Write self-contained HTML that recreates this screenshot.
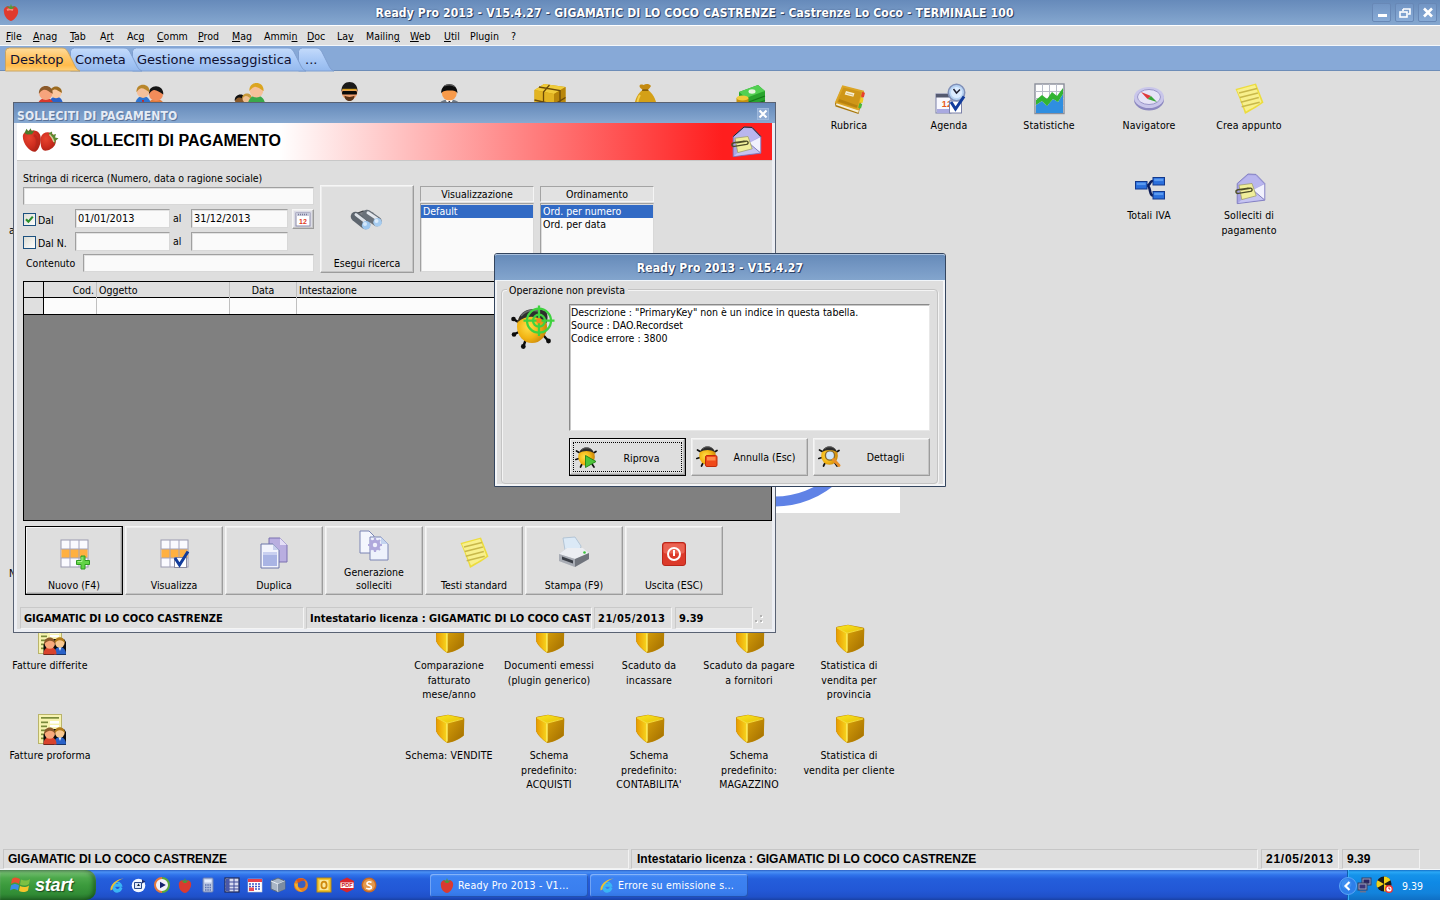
<!DOCTYPE html>
<html lang="it">
<head>
<meta charset="utf-8">
<title>Ready Pro 2013</title>
<style>
*{box-sizing:border-box;margin:0;padding:0}
html,body{width:1440px;height:900px;overflow:hidden}
body{position:relative;background:#dedede;font-family:"DejaVu Sans Condensed","Liberation Sans",sans-serif;font-size:10.5px;color:#000}
.abs{position:absolute}
.t{position:absolute;white-space:nowrap;line-height:14px;letter-spacing:0}
svg{position:absolute;overflow:visible}
u{text-decoration:underline}
/* main title bar */
#tb{left:0;top:0;width:1440px;height:25px;background:linear-gradient(#668aba 0%,#7699c5 50%,#86a8d0 100%)}
.ttl{color:#fff;font:bold 12px "DejaVu Sans Condensed","DejaVu Sans",sans-serif;letter-spacing:0.17px;text-shadow:1px 1px 0 #2e4163,0 0 2px #405a85;text-align:center}
.cbtn{position:absolute;top:3px;width:19px;height:19px;border:1px solid #6888b6;background:linear-gradient(#7295c4,#88abd6);border-radius:2px}
#mb{left:0;top:25px;width:1440px;height:21px;background:#dfdfdf;border-top:1px solid #fff;border-bottom:1px solid #f4f7fa}
#mb span{position:absolute;top:3px;white-space:nowrap;letter-spacing:0;line-height:14px}
#tabs{left:0;top:46px;width:1440px;height:25px;background:#87a9d7;border-bottom:1px solid #6d8db8}
.tl{position:absolute;top:6px;font:13px "DejaVu Sans",sans-serif;line-height:16px;white-space:nowrap;color:#101030}
#desk{left:0;top:71px;width:1440px;height:776px;background:#dedede;overflow:hidden}
.ic{position:absolute;width:120px;margin-left:-60px;text-align:center;line-height:14.6px;letter-spacing:0.12px;padding-top:35px}
.ic svg{left:44px;top:0;width:32px;height:32px}
#sb{left:0;top:847px;width:1440px;height:23px;background:#dedede;border-bottom:1px solid #f2f5f8}
.cell{position:absolute;top:2px;height:20px;border:1px solid;border-color:#c6c6c6 #f2f2f2 #f2f2f2 #c6c6c6;font:bold 12px "Liberation Sans",sans-serif;line-height:19px;padding-left:4px;white-space:nowrap;overflow:hidden}
#task{left:0;top:870px;width:1440px;height:30px;background:linear-gradient(#2b5fc4 0,#4a90f4 2px,#2f72ea 5px,#245edb 9px,#2257d5 21px,#1f50c8 27px,#1941a5 30px)}
/* child window */
.win{position:absolute;border:1px solid #596273;background:#eceef3}
.wtb{position:absolute;left:0;top:0;right:0;background:linear-gradient(#6589ba 0%,#7699c5 50%,#88a9d1 100%)}
.inp{position:absolute;background:#fafafa;border:1px solid;border-color:#a0a0a0 #d8d8d8 #d8d8d8 #a0a0a0;box-shadow:inset 1px 1px 0 #e2e2e2;font-size:10.9px;line-height:18px;padding-left:2px;white-space:nowrap;letter-spacing:0}
.btn{position:absolute;background:#dedede;border:1px solid;border-color:#f6f6f6 #9c9c9c #9c9c9c #f6f6f6;box-shadow:inset -1px -1px 0 #c4c4c4,inset 1px 1px 0 #ececec;text-align:center;letter-spacing:0;line-height:14px}
.btn.def{border-color:#000;box-shadow:inset -1px -1px 0 #9c9c9c,inset 1px 1px 0 #f6f6f6,inset -2px -2px 0 #c4c4c4}
.btn svg{position:absolute}
.btn span{position:absolute;left:0;right:0;white-space:nowrap}
.hdr{position:absolute;background:#e2e2e2;border:1px solid;border-color:#a4a4a4 #f4f4f4 #f4f4f4 #a4a4a4;text-align:center;line-height:14px;letter-spacing:0}
.lst{position:absolute;background:#fafafa;border:1px solid;border-color:#a0a0a0 #d8d8d8 #d8d8d8 #a0a0a0;box-shadow:inset 1px 1px 0 #dcdcdc;letter-spacing:0;line-height:13px}
.lst div{position:absolute;left:0;right:0;height:13px;padding-left:2px;white-space:nowrap}
.lst .sel{background:#316ac5;color:#fff}
.wc{position:absolute;top:1px;height:22px;border:1px solid;border-color:#c9c9c9 #f4f4f4 #f4f4f4 #c9c9c9;font:bold 11px "DejaVu Sans Condensed","DejaVu Sans",sans-serif;line-height:21px;padding-left:3px;white-space:nowrap;overflow:hidden}
</style>
</head>
<body>
<div id="desk" class="abs"></div>
<div id="tb" class="abs"><svg width="18" height="20" viewBox="0 0 18 20" style="left:2px;top:2px"><path d="M9,5 C13,3 17,6 16,11 C15,15 11,19 9,19 C7,19 2,15 2,10 C1,6 5,3 9,5Z" fill="#e03a2e"/><path d="M5,8 C7,7 9,7 11,8" stroke="#f58a7a" stroke-width="2" fill="none"/><path d="M4,4 L8,5 L9,2 L10,5 L14,4 L10,7 L8,7Z" fill="#4c9a3a"/></svg><div class="t ttl" style="left:0;width:1389px;top:6px">Ready Pro 2013 - V15.4.27 - GIGAMATIC DI LO COCO CASTRENZE - Castrenze Lo Coco - TERMINALE 100</div><div class="cbtn" style="left:1372px"><svg width="17" height="17" style="left:0;top:0"><rect x="5" y="10" width="9" height="3" fill="#fff"/></svg></div><div class="cbtn" style="left:1395px"><svg width="17" height="17" style="left:0;top:0"><path d="M7,5h7v5h-2 M7,5v2" stroke="#fff" stroke-width="1.6" fill="none"/><rect x="4" y="8" width="7" height="5" stroke="#fff" stroke-width="1.6" fill="none"/></svg></div><div class="cbtn" style="left:1418px"><svg width="17" height="17" style="left:0;top:0"><path d="M5,4.5l8,8M13,4.5l-8,8" stroke="#fff" stroke-width="2.6" fill="none"/></svg></div></div>
<div id="mb" class="abs"><span style="left:6px"><u>F</u>ile</span><span style="left:33px"><u>A</u>nag</span><span style="left:70px"><u>T</u>ab</span><span style="left:100px">A<u>r</u>t</span><span style="left:127px">Ac<u>q</u></span><span style="left:157px"><u>C</u>omm</span><span style="left:198px"><u>P</u>rod</span><span style="left:232px"><u>M</u>ag</span><span style="left:264px">Ammi<u>n</u></span><span style="left:307px"><u>D</u>oc</span><span style="left:337px">La<u>v</u></span><span style="left:366px">Mailin<u>g</u></span><span style="left:410px"><u>W</u>eb</span><span style="left:444px"><u>U</u>til</span><span style="left:470px">Plugin</span><span style="left:511px">?</span></div>
<div id="tabs" class="abs"><svg width="1440" height="25" style="left:0;top:0"><defs><linearGradient id="ga" x1="0" y1="0" x2="0" y2="1"><stop offset="0" stop-color="#ffdc9c"/><stop offset="0.35" stop-color="#ffc96e"/><stop offset="0.75" stop-color="#ffbb4c"/><stop offset="1" stop-color="#ffd27a"/></linearGradient><linearGradient id="gi" x1="0" y1="0" x2="0" y2="1"><stop offset="0" stop-color="#c4dbfb"/><stop offset="0.5" stop-color="#a9c9f6"/><stop offset="1" stop-color="#94b9ee"/></linearGradient></defs><path d="M298.5,25 L298.5,5.5 Q298.5,2 302.5,2 L316,2 C320,2 321.5,5 323,8 L329.5,21 Q331,24 334,25 Z" fill="url(#gi)" stroke="#7f9fd0" stroke-width="1"/><path d="M132.5,25 L132.5,5.5 Q132.5,2 136.5,2 L288,2 C292,2 293.5,5 295,8 L301.5,21 Q303,24 306,25 Z" fill="url(#gi)" stroke="#7f9fd0" stroke-width="1"/><path d="M70.5,25 L70.5,5.5 Q70.5,2 74.5,2 L124,2 C128,2 129.5,5 131,8 L137.5,21 Q139,24 142,25 Z" fill="url(#gi)" stroke="#7f9fd0" stroke-width="1"/><path d="M5.5,25 L5.5,5.5 Q5.5,2 9.5,2 L62,2 C66,2 67.5,5 69,8 L75.5,21 Q77,24 80,25 Z" fill="url(#ga)" stroke="#c9a463" stroke-width="1"/></svg><span class="tl" style="left:10px">Desktop</span><span class="tl" style="left:75px">Cometa</span><span class="tl" style="left:137px">Gestione messaggistica</span><span class="tl" style="left:305px">...</span></div>
<div id="sb" class="abs"><div class="cell" style="left:3px;width:626px">GIGAMATIC DI LO COCO CASTRENZE</div><div class="cell" style="left:631px;width:627px;padding-left:5px;letter-spacing:0.03px">Intestatario licenza : GIGAMATIC DI LO COCO CASTRENZE</div><div class="cell" style="left:1261px;width:78px;letter-spacing:0.75px">21/05/2013</div><div class="cell" style="left:1342px;width:78px">9.39</div></div>
<div id="task" class="abs"><div class="abs" style="left:0;top:0;width:96px;height:30px;border-radius:0 10px 10px 0;background:linear-gradient(#2f7d32 0,#6cba69 3px,#4ca84b 8px,#3c9b3d 15px,#318c35 24px,#256e2a 30px);box-shadow:inset -3px 0 4px rgba(0,40,0,.45),inset 0 2px 2px rgba(255,255,255,.25)"></div><svg width="20" height="18" viewBox="0 0 20 18" style="left:11px;top:6px"><path d="M1,3 C3,1 6,1 9,3 L8,8 C5,6 3,6 0,8Z" fill="#e8502f"/><path d="M10,3.5 C13,5 16,5 19,3 L18,8 C15,10 12,10 9,8.5Z" fill="#7cc043"/><path d="M0,9.5 C3,7.5 5,7.5 8,9.5 L7,14.5 C4,12.5 2,12.5 -1,14.5Z" fill="#3a8ee6"/><path d="M9,10 C12,11.5 15,11.5 18,9.5 L17,14.5 C14,16.5 11,16.5 8,15Z" fill="#f5c52c"/></svg><div class="t" style="left:35px;top:5px;color:#fff;font:italic bold 18px 'Liberation Sans',sans-serif;line-height:21px;letter-spacing:-0.2px;text-shadow:1px 1px 1px #1d4a1f">start</div><svg width="16" height="16" viewBox="0 0 16 16" style="left:109px;top:7px"><path d="M12.8,9.2H5.6a2.9 3.3 0 0 0 5.6 1.3l1.5.9a4.7 5 0 1 1 .1-2.2zM5.7,7.4h4.9a2.5 2.6 0 0 0-4.9 0z" fill="#3ab6f6" stroke="#3ab6f6" stroke-width="1.2"/><path d="M1.6,13.6 C0.5,9 6,2.5 14.6,1.6 C8,3.6 3.6,8.4 3.4,12.6Z" fill="#f0c030"/></svg><svg width="16" height="16" viewBox="0 0 16 16" style="left:131px;top:7px"><circle cx="7.5" cy="8.5" r="6.8" fill="#f4f8ff"/><path d="M3.5,5.5h7v6h-7z" fill="#dfe8f8" stroke="#2a4a8a" stroke-width="1"/><path d="M6,9l3,0-1.5,-2.5z" fill="#123"/><path d="M11,2.5l3.5,2-3.5,2z" fill="#1c2c6c"/></svg><svg width="16" height="16" viewBox="0 0 16 16" style="left:154px;top:7px"><circle cx="8" cy="8" r="7" fill="#f2f2fa"/><path d="M8,1 A7 7 0 0 0 8,15" stroke="#e8783a" stroke-width="2" fill="none"/><path d="M8,1 A7 7 0 0 1 8,15" stroke="#5aa83a" stroke-width="2" fill="none"/><path d="M6,4.8 L11.8,8 L6,11.2Z" fill="#14246c"/></svg><svg width="16" height="16" viewBox="0 0 16 16" style="left:177px;top:7px"><path d="M8,4 C12,2 15,5 14,9 C13,13 10,16 8,16 C6,16 2,13 2,9 C1,5 4,2 8,4Z" fill="#d93a30"/><path d="M4,3 L7,4 L8,1 L9,4 L12,3 L9,6 L7,6Z" fill="#4c9a3a"/></svg><svg width="16" height="16" viewBox="0 0 16 16" style="left:200px;top:7px"><rect x="3" y="1" width="10" height="14" rx="1" fill="#b9c6e2" stroke="#6f82b4" stroke-width="1"/><rect x="4.5" y="2.5" width="7" height="3" fill="#e8f0ff"/><path d="M5,8h6M5,10.5h6M5,13h6" stroke="#5d74b0" stroke-width="1.4" stroke-dasharray="1.5 0.8"/></svg><svg width="16" height="16" viewBox="0 0 16 16" style="left:224px;top:7px"><rect x="1" y="1" width="14" height="14" fill="#d8dcf0" stroke="#222a55" stroke-width="1.2"/><path d="M1,5h14M1,9h14M1,12h14M5,1v14M10,1v14" stroke="#3d4a9a" stroke-width="1"/><rect x="2" y="2" width="3" height="12" fill="#4a58a8"/></svg><svg width="16" height="16" viewBox="0 0 16 16" style="left:247px;top:7px"><rect x="1" y="2" width="14" height="13" fill="#fff" stroke="#c8ccd8" stroke-width=".6"/><rect x="1" y="2" width="14" height="3" fill="#e8404a"/><path d="M2,7h12M2,9.5h12M2,12h12" stroke="#3f57c8" stroke-width="1.6" stroke-dasharray="2 1"/><rect x="2" y="10.5" width="5" height="3.5" fill="#e84a55"/></svg><svg width="16" height="16" viewBox="0 0 16 16" style="left:270px;top:7px"><path d="M8,1 L15,4 L15,12 L8,15 L1,12 L1,4Z" fill="#a9b6c6" stroke="#5d6b7e" stroke-width="1"/><path d="M1,4 L8,7 L15,4 M8,7 V15" stroke="#e7edf4" stroke-width="1" fill="none"/><path d="M8,7 L15,4 L15,12 L8,15Z" fill="#7d8da2"/></svg><svg width="16" height="16" viewBox="0 0 16 16" style="left:293px;top:7px"><circle cx="8" cy="8" r="7" fill="#e8801f"/><circle cx="8.5" cy="7" r="4" fill="#3a5fc0"/><path d="M1.5,6 C2,12 6,15 10,14.5 C6,13 4,10 5,6 C4,7 2.5,7 1.5,6Z" fill="#f4b12c"/><path d="M3,3 C6,1 11,1 13,4 C10,3 7,4 6,6Z" fill="#d9531e"/></svg><svg width="16" height="16" viewBox="0 0 16 16" style="left:316px;top:7px"><rect x="1" y="1" width="14" height="14" fill="#f3c531" stroke="#b98a12" stroke-width="1"/><rect x="3.5" y="3" width="9" height="10" fill="#fbe9a0"/><ellipse cx="8" cy="8" rx="2.6" ry="3.4" fill="none" stroke="#d08a10" stroke-width="1.8"/></svg><svg width="16" height="16" viewBox="0 0 16 16" style="left:339px;top:7px"><path d="M8,0.5 L15,4 L15,12 L8,15.5 L1,12 L1,4Z" fill="#d8262c"/><rect x="1.5" y="5.5" width="13" height="5.5" fill="#fff"/><text x="8" y="10.3" font-family="Liberation Sans,sans-serif" font-weight="bold" font-size="5.5" text-anchor="middle" fill="#c8161d">PDF</text></svg><svg width="16" height="16" viewBox="0 0 16 16" style="left:361px;top:7px"><circle cx="8" cy="8" r="7.5" fill="#c96a24"/><circle cx="8" cy="8" r="6" fill="#e49a4e"/><path d="M10.5,5.5 C8,4 5.5,5 6,7 C6.5,9 10.5,8 10.5,10.2 C10.5,12 7,12.5 5.2,11" stroke="#fff" stroke-width="1.6" fill="none"/></svg><div class="abs" style="left:430px;top:4px;width:158px;height:23px;border-radius:3px;background:linear-gradient(#5a9af8 0,#3d83f2 3px,#3a7eee 18px,#3274e2 23px);box-shadow:inset 1px 1px 0 rgba(255,255,255,.28),inset -1px -1px 0 rgba(0,0,60,.3)"><svg width="16" height="16" viewBox="0 0 16 16" style="left:9px;top:3px"><path d="M8,4 C12,2 15,5 14,9 C13,13 10,16 8,16 C6,16 2,13 2,9 C1,5 4,2 8,4Z" fill="#d93a30"/><path d="M4,3 L7,4 L8,1 L9,4 L12,3 L9,6 L7,6Z" fill="#4c9a3a"/></svg><div class="t" style="left:28px;top:4px;color:#fff;letter-spacing:0.25px">Ready Pro 2013 - V1...</div></div><div class="abs" style="left:590px;top:4px;width:158px;height:23px;border-radius:3px;background:linear-gradient(#5a9af8 0,#3d83f2 3px,#3a7eee 18px,#3274e2 23px);box-shadow:inset 1px 1px 0 rgba(255,255,255,.28),inset -1px -1px 0 rgba(0,0,60,.3)"><svg width="16" height="16" viewBox="0 0 16 16" style="left:9px;top:3px"><path d="M12.8,9.2H5.6a2.9 3.3 0 0 0 5.6 1.3l1.5.9a4.7 5 0 1 1 .1-2.2zM5.7,7.4h4.9a2.5 2.6 0 0 0-4.9 0z" fill="#3ab6f6" stroke="#3ab6f6" stroke-width="1.2"/><path d="M1.6,13.6 C0.5,9 6,2.5 14.6,1.6 C8,3.6 3.6,8.4 3.4,12.6Z" fill="#f0c030"/></svg><div class="t" style="left:28px;top:4px;color:#fff;letter-spacing:0.25px">Errore su emissione s...</div></div><div class="abs" style="left:1347px;top:0;width:93px;height:30px;background:linear-gradient(#1470c8 0,#2aa8f6 2px,#1593ea 5px,#0f8ae6 12px,#1283dc 23px,#0f6fc4 30px);border-left:1px solid #0e5fae;box-shadow:inset 1px 0 0 #35aef7"></div><svg width="18" height="18" viewBox="0 0 18 18" style="left:1338.5px;top:6.5px"><circle cx="9" cy="9" r="8.5" fill="#2d7fea" stroke="#5aa6f6" stroke-width="1"/><circle cx="7.5" cy="7" r="5" fill="#4a98f4" opacity=".6"/><path d="M10.5,5 L6.5,9 L10.5,13" stroke="#fff" stroke-width="2.2" fill="none"/></svg><svg width="16" height="16" viewBox="0 0 16 16" style="left:1357px;top:7px"><rect x="5" y="1" width="9" height="7" fill="#9aa0c0" stroke="#3a3f60" stroke-width="1"/><rect x="6.5" y="2.5" width="6" height="4" fill="#2a2460"/><rect x="1" y="6" width="9" height="7" fill="#9aa0c0" stroke="#3a3f60" stroke-width="1"/><rect x="2.5" y="7.5" width="6" height="4" fill="#3a3478"/><rect x="3" y="14" width="6" height="1.5" fill="#6a7290"/></svg><svg width="18" height="18" viewBox="0 0 18 18" style="left:1376px;top:6px"><circle cx="8" cy="8" r="7.5" fill="#1a1a1a"/><path d="M8,8 L8,0.5 A7.5 7.5 0 0 1 14.5,4.2Z M8,8 L14.5,11.8 A7.5 7.5 0 0 1 8,15.5Z M8,8 L1.5,11.8 A7.5 7.5 0 0 1 1.5,4.2Z" fill="#f2d21a"/><circle cx="13" cy="13" r="4" fill="#e33"/><circle cx="13" cy="13" r="2.6" fill="#fff"/><path d="M13,11.3V13H14.4" stroke="#c22" stroke-width="1" fill="none"/></svg><div class="t" style="left:1402px;top:9px;color:#fff;letter-spacing:0">9.39</div></div>
<div id="deskicons" class="abs" style="left:0;top:0;width:1440px;height:869px;overflow:hidden"><div class="ic" style="left:50px;top:83px"><svg viewBox="0 0 32 32" style="top:0px"><path d="M13.9,32 C13.9,14.6 18.6,13.8 22,13.8 C25.4,13.8 30.1,14.6 30.1,32Z" fill="#2a62c8"/><circle cx="22" cy="9.6" r="5.6" fill="#fac8a0"/><path d="M16.1,10.1 C15.4,1.2 28.6,1.2 27.9,10.1 C24.8,8.2 22.6,6.2 20.3,6.5 C18.1,7.1 17.0,9.0 16.1,10.1Z" fill="#9b6b20"/><path d="M2.2,32 C2.2,16.2 7.8,15.2 11.8,15.2 C15.8,15.2 21.4,16.2 21.4,32Z" fill="#d8382c"/><circle cx="11.8" cy="10.3" r="6.6" fill="#f6a47c"/><path d="M4.9,10.8 C4.2,0.4 19.4,0.4 18.7,10.8 C15.1,8.7 12.5,6.3 9.8,6.7 C7.2,7.3 5.9,9.6 4.9,10.8Z" fill="#8b5a2b"/></svg>Clienti</div><div class="ic" style="left:150px;top:83px"><svg viewBox="0 0 32 32" style="top:0px"><path d="M11.8,32 C11.8,17.3 17.8,16.2 22,16.2 C26.2,16.2 32.1,17.3 32.1,32Z" fill="#e07a3a"/><circle cx="22" cy="11.0" r="7" fill="#f28c5a"/><path d="M14.7,11.5 C14.0,0.5 30.0,0.5 29.3,11.5 C25.5,9.2 22.7,6.8 19.9,7.1 C17.1,7.8 15.7,10.3 14.7,11.5Z" fill="#151515"/><path d="M0.0,32 C0.0,14.3 5.3,13.3 9,13.3 C12.7,13.3 18.0,14.3 18.0,32Z" fill="#2f74d0"/><circle cx="9" cy="8.7" r="6.2" fill="#f5c09a"/><path d="M2.5,9.2 C1.8,-0.6 16.2,-0.6 15.5,9.2 C12.1,7.1 9.6,5.0 7.1,5.3 C4.7,5.9 3.4,8.1 2.5,9.2Z" fill="#b8862b"/><path d="M8,17 l2,0 l-1,6z" fill="#c22"/></svg>Fornitori</div><div class="ic" style="left:250px;top:83px"><svg viewBox="0 0 32 32" style="top:0px"><path d="M-1.5,32 C-1.5,22.4 3.2,21.6 6.5,21.6 C9.8,21.6 14.5,22.4 14.5,32Z" fill="#444"/><circle cx="6.5" cy="17.5" r="5.5" fill="#8a5a2a"/><path d="M0.7,18.0 C0.0,9.2 13.0,9.2 12.3,18.0 C9.2,16.1 7.0,14.2 4.8,14.5 C2.7,15.0 1.5,16.9 0.7,18.0Z" fill="#111"/><path d="M6.5,32 C6.5,19.6 10.3,18.9 13,18.9 C15.7,18.9 19.5,19.6 19.5,32Z" fill="#a85"/><circle cx="13" cy="15.5" r="4.5" fill="#f0c090"/><path d="M8.2,16.0 C7.5,8.8 18.5,8.8 17.8,16.0 C15.2,14.4 13.4,12.8 11.7,13.0 C9.8,13.5 8.9,15.1 8.2,16.0Z" fill="#c89a3a"/><path d="M12.6,32 C12.6,13.7 18.4,12.7 22.5,12.7 C26.6,12.7 32.4,13.7 32.4,32Z" fill="#3aa84a"/><circle cx="22.5" cy="7.6" r="6.8" fill="#f5c09a"/><path d="M15.4,8.1 C14.7,-2.6 30.3,-2.6 29.6,8.1 C25.9,5.9 23.2,3.5 20.5,3.9 C17.7,4.5 16.4,6.9 15.4,8.1Z" fill="#dba520"/></svg>Contatti</div><div class="ic" style="left:350px;top:83px"><svg viewBox="0 0 32 32" style="top:0px"><path d="M3,32 C3,22 9,19 15.5,19 C22,19 28,22 28,32Z" fill="#555"/><circle cx="15.5" cy="8.8" r="8" fill="#f0a070"/><path d="M7.5,8.8 C6.5,-4.199999999999999 24.5,-4.199999999999999 23.5,8.8 L22.5,6.300000000000001 L8.5,6.300000000000001Z" fill="#1a1a1a"/><rect x="8.5" y="5.800000000000001" width="14" height="1.6" fill="#d8a020"/><rect x="8.1" y="8.0" width="14.8" height="3.6" rx="1.2" fill="#0a0a0a"/><path d="M10.5,12.8 C10.5,19.8 20.5,19.8 20.5,12.8 C17.5,14.3 13.5,14.3 10.5,12.8Z" fill="#5a3318"/></svg>Agenti</div><div class="ic" style="left:450px;top:83px"><svg viewBox="0 0 32 32" style="top:0px"><path d="M2,32 C2,21 7,16.2 15.3,16.2 C23.5,16.2 29,21 29,32Z" fill="#6f7a88"/><path d="M11.5,16.6 L15.3,24 L19,16.6Z" fill="#fff"/><path d="M14.5,18 L15.3,24 L16.2,18Z" fill="#334"/><ellipse cx="15.3" cy="9.799999999999999" rx="7.5" ry="7.6" fill="#f79a4a"/><path d="M7.200000000000001,10.6 C6.300000000000001,-1.9000000000000004 24.3,-1.9000000000000004 23.400000000000002,10.6 C22.6,7.1 18.3,7.3999999999999995 14.3,7.3999999999999995 C10.8,7.6 7.800000000000001,8.1 7.200000000000001,10.6Z" fill="#0c0c0c"/><path d="M10.3,3.0999999999999996 C13.3,1.3999999999999995 18.3,1.3999999999999995 20.8,3.5999999999999996" stroke="#5a5a5a" stroke-width="1.2" fill="none"/></svg>Vettori</div><div class="ic" style="left:550px;top:83px"><svg viewBox="0 0 32 32" style="top:0px"><path d="M0.5,7 L10,1 L31.5,4 L31.5,24 L20,31 L0.5,26Z" fill="#c8960e"/><path d="M0.5,7 L10,1 L31.5,4 L20,11Z" fill="#f0cc3a"/><path d="M0.5,7 L20,11 L20,31 L0.5,26Z" fill="#e2b422"/><path d="M20,11 L31.5,4 L31.5,24 L20,31Z" fill="#b8860b"/><path d="M5,4 L26,7.5 L26,27.5 M15.5,2 L9.5,9 L9.5,28.5 M0.5,17 L20,21.5 L31.5,14.5" stroke="#6b4a08" stroke-width="1.3" fill="none"/></svg>Articoli</div><div class="ic" style="left:650px;top:83px"><svg viewBox="0 0 32 32" style="top:0px"><path d="M7,5.5 C4,3 6,0.5 9.5,2 C12,0.5 15,0.5 17,3 C16,5 14.5,6 13.5,7 L9,7Z" fill="#c48a10"/><path d="M8.5,7 L14,7 C18,10 22.5,16 22.5,23 C22.5,29 17,31 11.5,31 C6,31 0.5,29 0.5,23 C0.5,16 4.5,10 8.5,7Z" fill="#d4a017"/><path d="M6,12 C3.5,16 3,20 3.5,24" stroke="#f2d050" stroke-width="2" fill="none"/><rect x="8" y="6.3" width="6.5" height="1.8" rx=".9" fill="#8a5f08"/></svg>Prima nota</div><div class="ic" style="left:750px;top:83px"><svg viewBox="0 0 32 32" style="top:0px"><path d="M5,9 L24,2 L31,8 L31,22 L12,29 L5,23Z" fill="#2aa52e"/><path d="M5,9 L24,2 L31,8 L12,15Z" fill="#52d052"/><path d="M5,14 L12,20 L31,13 M5,18.5 L12,24.5 L31,17.5" stroke="#157a1a" stroke-width="1.2" fill="none"/><ellipse cx="18" cy="8.5" rx="3.5" ry="2.2" fill="#e6f5e0"/><ellipse cx="8.5" cy="24" rx="6" ry="2.5" fill="#d4a017"/><rect x="2.5" y="15" width="12" height="9" fill="#c4900f"/><ellipse cx="8.5" cy="15" rx="6" ry="2.5" fill="#f0cc3a"/></svg>Scadenze</div><div class="ic" style="left:849px;top:83px"><svg viewBox="0 0 32 32" style="top:0px"><path d="M2,20.5 L9.5,3 L31,8.5 L25.5,31 L2.5,23.5Z" fill="#a8760a"/><path d="M3,22 L25.2,29.8 L26,27 L3.6,19.6Z" fill="#f6efd6"/><path d="M1.8,19.8 L9.3,2.3 L31,7.8 L25.6,27.6Z" fill="#dca626"/><path d="M4,19.2 L10.4,4.4 L28.6,9 L24,25.6Z" fill="#cf9618"/><path d="M5.2,18.8 L6.4,16 L24.6,22.4 L24,24.8Z" fill="#b8820e"/><path d="M13,8 L21.5,10.2 L20.3,13.8 L11.7,11.4Z" fill="#f7efd2"/><path d="M13.5,10.3 L20,12" stroke="#c9b070" stroke-width=".8"/><path d="M29.2,9 L32,9.8 L30.8,14.4 L28,13.6Z" fill="#e8402c"/><path d="M27.8,14.6 L30.6,15.4 L29.4,20 L26.6,19.2Z" fill="#f0d020"/><path d="M26.4,20.2 L29.2,21 L28,25.6 L25.2,24.8Z" fill="#48b838"/></svg>Rubrica</div><div class="ic" style="left:949px;top:83px"><svg viewBox="0 0 32 32" style="top:0px"><rect x="3" y="11" width="15" height="19" fill="#f8f8ff" stroke="#7a80a8" stroke-width="1"/><rect x="3" y="11" width="15" height="3.5" fill="#555a70"/><path d="M4,26h13v4h-13z" fill="#a9a9e0"/><text x="14" y="24" font-family="Liberation Sans,sans-serif" font-weight="bold" font-size="9" text-anchor="middle" fill="#e85a1a">12</text><rect x="16.5" y="18" width="12" height="12" fill="#fff" stroke="#7a80a8" stroke-width="1"/><circle cx="23.5" cy="9.5" r="8.2" fill="#b8d4f4" stroke="#8090b8" stroke-width="1.6"/><circle cx="23.5" cy="9.5" r="5.6" fill="#dcecff"/><path d="M20.5,6 L23.5,10 L27,6.5" stroke="#223" stroke-width="1.5" fill="none"/><path d="M18,19 L22.5,26 L31,13.5" stroke="#123c9c" stroke-width="3" fill="none"/></svg>Agenda</div><div class="ic" style="left:1049px;top:83px"><svg viewBox="0 0 32 32" style="top:0px"><rect x="2" y="1" width="29" height="29.5" fill="#fdfdfd" stroke="#8a8e9a" stroke-width="1.4"/><path d="M9.5,1V30" stroke="#b8bcc8" stroke-width="1"/><path d="M16.5,1V30" stroke="#b8bcc8" stroke-width="1"/><path d="M23.5,1V30" stroke="#b8bcc8" stroke-width="1"/><path d="M2,8.5H31" stroke="#b8bcc8" stroke-width="1"/><path d="M2,15.5H31" stroke="#b8bcc8" stroke-width="1"/><path d="M2,22.5H31" stroke="#b8bcc8" stroke-width="1"/><path d="M3,30 L3,22 L9,18 L14,23 L20,16 L25,19 L30,11 L30,30Z" fill="#2f8ee0"/><path d="M3,22 L3,17 L9,12 L14,16 L19,9 L24,13 L30,5 L30,11 L25,19 L20,16 L14,23 L9,18Z" fill="#32b432"/></svg>Statistiche</div><div class="ic" style="left:1149px;top:83px"><svg viewBox="0 0 32 32" style="top:0px"><ellipse cx="16" cy="16.5" rx="15" ry="11" fill="#8c88c0"/><ellipse cx="16" cy="14.5" rx="15" ry="10.5" fill="#c9c6ea"/><ellipse cx="16" cy="14" rx="11.5" ry="7.5" fill="#e6e4f6" stroke="#9a96c8" stroke-width="1"/><path d="M8,9 L18,13 L14.5,16Z" fill="#e03a3a"/><path d="M24,19 L14.5,16 L18,13Z" fill="#3aa83a"/></svg>Navigatore</div><div class="ic" style="left:1249px;top:83px"><svg viewBox="0 0 32 32" style="top:0px"><path d="M2.5,6 L23,0.5 L30.5,19.5 C26,23 21,26 12,31 C10,24 6,14 2.5,6Z" fill="#ecdc3e"/><path d="M4,7 L22,2 L28.5,19 C24,22.5 20,24.5 13,28.5Z" fill="#f8f08c"/><path d="M6.0,10.0 L24.0,5.4" stroke="#c8b84a" stroke-width="1.5"/><path d="M6.9,14.6 L24.9,10.0" stroke="#c8b84a" stroke-width="1.5"/><path d="M7.8,19.2 L25.8,14.6" stroke="#c8b84a" stroke-width="1.5"/><path d="M8.7,23.8 L26.7,19.2" stroke="#c8b84a" stroke-width="1.5"/></svg>Crea appunto</div><div class="ic" style="left:1149px;top:173px"><svg viewBox="0 0 32 32" style="top:0px"><path d="M14,12.5 C18,12.5 16,8 20,8 M14,12.5 C18,13 16,22.5 20,22.5" stroke="#0c1c58" stroke-width="2.6" fill="none"/><rect x="2.5" y="8.5" width="11.5" height="7.5" fill="#2a6fdc" stroke="#12388c" stroke-width="1"/><rect x="3.7" y="9.7" width="9" height="2.4" fill="#5b9af0"/><rect x="20" y="4.5" width="11.5" height="7.5" fill="#2a6fdc" stroke="#12388c" stroke-width="1"/><rect x="21.2" y="5.7" width="9" height="2.4" fill="#5b9af0"/><rect x="20" y="18.5" width="11.5" height="7.5" fill="#2a6fdc" stroke="#12388c" stroke-width="1"/><rect x="21.2" y="19.7" width="9" height="2.4" fill="#5b9af0"/></svg>Totali IVA</div><div class="ic" style="left:1249px;top:173px"><svg viewBox="0 0 32 32" style="top:0px"><path d="M4.2,10.5 L15,1 L23,1.4 L31.8,10.5 L31.8,27.2 L4.2,30.6Z" fill="#a9a5e4" stroke="#7d79c0" stroke-width=".9"/><path d="M5.2,11 L15.3,2.2 L22.6,2.5 L30.6,10.8 L19.5,17.2Z" fill="#b9b6ee"/><path d="M19.5,17.2 L31.2,11.2 L31.2,26.4Z" fill="#f1f1fd"/><path d="M19.5,17.2 L31.2,26.6 L5,30Z" fill="#c6c4f2"/><path d="M17,14.5 L31.2,26.6" stroke="#7a76b8" stroke-width=".9" fill="none"/><path d="M6,12.2 L19,10.5 L23.2,22.8 L8.8,26.6Z" fill="#f0ee9a" stroke="#9a9860" stroke-width=".7"/><path d="M15.5,15.2 L5,16.8 C2,17.4 2.4,20.8 5.4,20.4 L17.5,18.4 C20,17.9 19.4,14.8 17,15.2 L8,16.8" stroke="#4e4e28" stroke-width="1.4" fill="none"/></svg>Solleciti di<br>pagamento</div><div class="ic" style="left:50px;top:623px"><svg viewBox="0 0 32 32" style="top:0px"><rect x="4.5" y="1.5" width="23" height="29" fill="#f7f3b0" stroke="#b9b46a" stroke-width="1"/><rect x="7" y="4" width="18" height="1.7" fill="#7a8a3a"/><rect x="7" y="8.5" width="7" height="1.7" fill="#7a8a3a"/><rect x="7" y="12.5" width="6" height="1.7" fill="#7a8a3a"/><rect x="7" y="16.5" width="5" height="1.7" fill="#7a8a3a"/><rect x="7" y="20.5" width="4" height="1.7" fill="#7a8a3a"/><rect x="7" y="24.5" width="4" height="1.7" fill="#7a8a3a"/><rect x="16" y="8" width="9" height="2.6" fill="#fff"/><rect x="16" y="12" width="9" height="2.2" fill="#fff"/><path d="M9.5,32 V22 L12,16 H30 L32,19 V32Z" fill="#0a0a0a"/><path d="M20,31.5 C20,26 23,24 26,24 C29,24 32,26 32,31.5Z" fill="#2a62c8"/><path d="M24.5,24.3 L26,28 L27.5,24.3Z" fill="#dfe8f8"/><circle cx="25.8" cy="19.8" r="4.8" fill="#f8c890"/><path d="M20.8,20.5 C20,12.3 31.6,12.3 30.8,20.5 C29.5,17.8 27,16.8 25,17.3 C23,17.7 21.6,19 20.8,20.5Z" fill="#b07a1a"/><path d="M9.5,31.5 C9.5,26 12.5,24.3 16,24.3 C19.5,24.3 22.5,26 22.5,31.5Z" fill="#d8432c"/><circle cx="15.8" cy="20.5" r="5.2" fill="#f8a87c"/><path d="M10.3,21.5 C9.3,12.3 22.3,12.3 21.3,21.5 C19.8,18.3 17.3,17.4 14.8,17.9 C12.8,18.3 11.3,19.5 10.3,21.5Z" fill="#8b5a2b"/></svg>Fatture differite</div><div class="ic" style="left:50px;top:713px"><svg viewBox="0 0 32 32" style="top:0px"><rect x="4.5" y="1.5" width="23" height="29" fill="#f7f3b0" stroke="#b9b46a" stroke-width="1"/><rect x="7" y="4" width="18" height="1.7" fill="#7a8a3a"/><rect x="7" y="8.5" width="7" height="1.7" fill="#7a8a3a"/><rect x="7" y="12.5" width="6" height="1.7" fill="#7a8a3a"/><rect x="7" y="16.5" width="5" height="1.7" fill="#7a8a3a"/><rect x="7" y="20.5" width="4" height="1.7" fill="#7a8a3a"/><rect x="7" y="24.5" width="4" height="1.7" fill="#7a8a3a"/><rect x="16" y="8" width="9" height="2.6" fill="#fff"/><rect x="16" y="12" width="9" height="2.2" fill="#fff"/><path d="M9.5,32 V22 L12,16 H30 L32,19 V32Z" fill="#0a0a0a"/><path d="M20,31.5 C20,26 23,24 26,24 C29,24 32,26 32,31.5Z" fill="#2a62c8"/><path d="M24.5,24.3 L26,28 L27.5,24.3Z" fill="#dfe8f8"/><circle cx="25.8" cy="19.8" r="4.8" fill="#f8c890"/><path d="M20.8,20.5 C20,12.3 31.6,12.3 30.8,20.5 C29.5,17.8 27,16.8 25,17.3 C23,17.7 21.6,19 20.8,20.5Z" fill="#b07a1a"/><path d="M9.5,31.5 C9.5,26 12.5,24.3 16,24.3 C19.5,24.3 22.5,26 22.5,31.5Z" fill="#d8432c"/><circle cx="15.8" cy="20.5" r="5.2" fill="#f8a87c"/><path d="M10.3,21.5 C9.3,12.3 22.3,12.3 21.3,21.5 C19.8,18.3 17.3,17.4 14.8,17.9 C12.8,18.3 11.3,19.5 10.3,21.5Z" fill="#8b5a2b"/></svg>Fatture proforma</div><div class="ic" style="left:449px;top:623px"><svg viewBox="0 0 32 32" style="top:0px"><defs><linearGradient id="cbl" x1="0" y1="0" x2="1" y2="0"><stop offset="0" stop-color="#e89a00"/><stop offset="1" stop-color="#f8d620"/></linearGradient><linearGradient id="cbr" x1="0" y1="0" x2="1" y2="1"><stop offset="0" stop-color="#d8a008"/><stop offset="1" stop-color="#a06c00"/></linearGradient><linearGradient id="cbt" x1="0" y1="0" x2="1" y2="1"><stop offset="0" stop-color="#fbe820"/><stop offset="1" stop-color="#e4bc08"/></linearGradient></defs><path d="M3,5 C3,4 4,3.6 5,3.4 L15,1.8 L30,4.6 C31,4.8 31.3,5.5 31.3,6.5 L30.8,22.5 C27,26 20,29.3 14.5,30 C10,27.5 5,22.5 3.2,18.5Z" fill="#c08a04"/><path d="M3.5,4.5 L15,2 L31,5.5 L14,10.2Z" fill="url(#cbt)"/><path d="M3.5,4.8 L14,10.2 L14,29.6 C10,27 5,22 3.5,18.3Z" fill="url(#cbl)"/><path d="M14,10.2 L31,5.6 L30.6,22.6 C26,26 20,29 14,29.6Z" fill="url(#cbr)"/><path d="M14,10.4 V28.5" stroke="#fff36a" stroke-width="1.3" fill="none"/><path d="M4,5 L14,10.2 L30,6" stroke="#fbe84a" stroke-width=".8" fill="none"/></svg>Comparazione<br>fatturato<br>mese/anno</div><div class="ic" style="left:549px;top:623px"><svg viewBox="0 0 32 32" style="top:0px"><defs><linearGradient id="cbl" x1="0" y1="0" x2="1" y2="0"><stop offset="0" stop-color="#e89a00"/><stop offset="1" stop-color="#f8d620"/></linearGradient><linearGradient id="cbr" x1="0" y1="0" x2="1" y2="1"><stop offset="0" stop-color="#d8a008"/><stop offset="1" stop-color="#a06c00"/></linearGradient><linearGradient id="cbt" x1="0" y1="0" x2="1" y2="1"><stop offset="0" stop-color="#fbe820"/><stop offset="1" stop-color="#e4bc08"/></linearGradient></defs><path d="M3,5 C3,4 4,3.6 5,3.4 L15,1.8 L30,4.6 C31,4.8 31.3,5.5 31.3,6.5 L30.8,22.5 C27,26 20,29.3 14.5,30 C10,27.5 5,22.5 3.2,18.5Z" fill="#c08a04"/><path d="M3.5,4.5 L15,2 L31,5.5 L14,10.2Z" fill="url(#cbt)"/><path d="M3.5,4.8 L14,10.2 L14,29.6 C10,27 5,22 3.5,18.3Z" fill="url(#cbl)"/><path d="M14,10.2 L31,5.6 L30.6,22.6 C26,26 20,29 14,29.6Z" fill="url(#cbr)"/><path d="M14,10.4 V28.5" stroke="#fff36a" stroke-width="1.3" fill="none"/><path d="M4,5 L14,10.2 L30,6" stroke="#fbe84a" stroke-width=".8" fill="none"/></svg>Documenti emessi<br>(plugin generico)</div><div class="ic" style="left:649px;top:623px"><svg viewBox="0 0 32 32" style="top:0px"><defs><linearGradient id="cbl" x1="0" y1="0" x2="1" y2="0"><stop offset="0" stop-color="#e89a00"/><stop offset="1" stop-color="#f8d620"/></linearGradient><linearGradient id="cbr" x1="0" y1="0" x2="1" y2="1"><stop offset="0" stop-color="#d8a008"/><stop offset="1" stop-color="#a06c00"/></linearGradient><linearGradient id="cbt" x1="0" y1="0" x2="1" y2="1"><stop offset="0" stop-color="#fbe820"/><stop offset="1" stop-color="#e4bc08"/></linearGradient></defs><path d="M3,5 C3,4 4,3.6 5,3.4 L15,1.8 L30,4.6 C31,4.8 31.3,5.5 31.3,6.5 L30.8,22.5 C27,26 20,29.3 14.5,30 C10,27.5 5,22.5 3.2,18.5Z" fill="#c08a04"/><path d="M3.5,4.5 L15,2 L31,5.5 L14,10.2Z" fill="url(#cbt)"/><path d="M3.5,4.8 L14,10.2 L14,29.6 C10,27 5,22 3.5,18.3Z" fill="url(#cbl)"/><path d="M14,10.2 L31,5.6 L30.6,22.6 C26,26 20,29 14,29.6Z" fill="url(#cbr)"/><path d="M14,10.4 V28.5" stroke="#fff36a" stroke-width="1.3" fill="none"/><path d="M4,5 L14,10.2 L30,6" stroke="#fbe84a" stroke-width=".8" fill="none"/></svg>Scaduto da<br>incassare</div><div class="ic" style="left:749px;top:623px"><svg viewBox="0 0 32 32" style="top:0px"><defs><linearGradient id="cbl" x1="0" y1="0" x2="1" y2="0"><stop offset="0" stop-color="#e89a00"/><stop offset="1" stop-color="#f8d620"/></linearGradient><linearGradient id="cbr" x1="0" y1="0" x2="1" y2="1"><stop offset="0" stop-color="#d8a008"/><stop offset="1" stop-color="#a06c00"/></linearGradient><linearGradient id="cbt" x1="0" y1="0" x2="1" y2="1"><stop offset="0" stop-color="#fbe820"/><stop offset="1" stop-color="#e4bc08"/></linearGradient></defs><path d="M3,5 C3,4 4,3.6 5,3.4 L15,1.8 L30,4.6 C31,4.8 31.3,5.5 31.3,6.5 L30.8,22.5 C27,26 20,29.3 14.5,30 C10,27.5 5,22.5 3.2,18.5Z" fill="#c08a04"/><path d="M3.5,4.5 L15,2 L31,5.5 L14,10.2Z" fill="url(#cbt)"/><path d="M3.5,4.8 L14,10.2 L14,29.6 C10,27 5,22 3.5,18.3Z" fill="url(#cbl)"/><path d="M14,10.2 L31,5.6 L30.6,22.6 C26,26 20,29 14,29.6Z" fill="url(#cbr)"/><path d="M14,10.4 V28.5" stroke="#fff36a" stroke-width="1.3" fill="none"/><path d="M4,5 L14,10.2 L30,6" stroke="#fbe84a" stroke-width=".8" fill="none"/></svg>Scaduto da pagare<br>a fornitori</div><div class="ic" style="left:849px;top:623px"><svg viewBox="0 0 32 32" style="top:0px"><defs><linearGradient id="cbl" x1="0" y1="0" x2="1" y2="0"><stop offset="0" stop-color="#e89a00"/><stop offset="1" stop-color="#f8d620"/></linearGradient><linearGradient id="cbr" x1="0" y1="0" x2="1" y2="1"><stop offset="0" stop-color="#d8a008"/><stop offset="1" stop-color="#a06c00"/></linearGradient><linearGradient id="cbt" x1="0" y1="0" x2="1" y2="1"><stop offset="0" stop-color="#fbe820"/><stop offset="1" stop-color="#e4bc08"/></linearGradient></defs><path d="M3,5 C3,4 4,3.6 5,3.4 L15,1.8 L30,4.6 C31,4.8 31.3,5.5 31.3,6.5 L30.8,22.5 C27,26 20,29.3 14.5,30 C10,27.5 5,22.5 3.2,18.5Z" fill="#c08a04"/><path d="M3.5,4.5 L15,2 L31,5.5 L14,10.2Z" fill="url(#cbt)"/><path d="M3.5,4.8 L14,10.2 L14,29.6 C10,27 5,22 3.5,18.3Z" fill="url(#cbl)"/><path d="M14,10.2 L31,5.6 L30.6,22.6 C26,26 20,29 14,29.6Z" fill="url(#cbr)"/><path d="M14,10.4 V28.5" stroke="#fff36a" stroke-width="1.3" fill="none"/><path d="M4,5 L14,10.2 L30,6" stroke="#fbe84a" stroke-width=".8" fill="none"/></svg>Statistica di<br>vendita per<br>provincia</div><div class="ic" style="left:449px;top:713px"><svg viewBox="0 0 32 32" style="top:0px"><defs><linearGradient id="cbl" x1="0" y1="0" x2="1" y2="0"><stop offset="0" stop-color="#e89a00"/><stop offset="1" stop-color="#f8d620"/></linearGradient><linearGradient id="cbr" x1="0" y1="0" x2="1" y2="1"><stop offset="0" stop-color="#d8a008"/><stop offset="1" stop-color="#a06c00"/></linearGradient><linearGradient id="cbt" x1="0" y1="0" x2="1" y2="1"><stop offset="0" stop-color="#fbe820"/><stop offset="1" stop-color="#e4bc08"/></linearGradient></defs><path d="M3,5 C3,4 4,3.6 5,3.4 L15,1.8 L30,4.6 C31,4.8 31.3,5.5 31.3,6.5 L30.8,22.5 C27,26 20,29.3 14.5,30 C10,27.5 5,22.5 3.2,18.5Z" fill="#c08a04"/><path d="M3.5,4.5 L15,2 L31,5.5 L14,10.2Z" fill="url(#cbt)"/><path d="M3.5,4.8 L14,10.2 L14,29.6 C10,27 5,22 3.5,18.3Z" fill="url(#cbl)"/><path d="M14,10.2 L31,5.6 L30.6,22.6 C26,26 20,29 14,29.6Z" fill="url(#cbr)"/><path d="M14,10.4 V28.5" stroke="#fff36a" stroke-width="1.3" fill="none"/><path d="M4,5 L14,10.2 L30,6" stroke="#fbe84a" stroke-width=".8" fill="none"/></svg>Schema: VENDITE</div><div class="ic" style="left:549px;top:713px"><svg viewBox="0 0 32 32" style="top:0px"><defs><linearGradient id="cbl" x1="0" y1="0" x2="1" y2="0"><stop offset="0" stop-color="#e89a00"/><stop offset="1" stop-color="#f8d620"/></linearGradient><linearGradient id="cbr" x1="0" y1="0" x2="1" y2="1"><stop offset="0" stop-color="#d8a008"/><stop offset="1" stop-color="#a06c00"/></linearGradient><linearGradient id="cbt" x1="0" y1="0" x2="1" y2="1"><stop offset="0" stop-color="#fbe820"/><stop offset="1" stop-color="#e4bc08"/></linearGradient></defs><path d="M3,5 C3,4 4,3.6 5,3.4 L15,1.8 L30,4.6 C31,4.8 31.3,5.5 31.3,6.5 L30.8,22.5 C27,26 20,29.3 14.5,30 C10,27.5 5,22.5 3.2,18.5Z" fill="#c08a04"/><path d="M3.5,4.5 L15,2 L31,5.5 L14,10.2Z" fill="url(#cbt)"/><path d="M3.5,4.8 L14,10.2 L14,29.6 C10,27 5,22 3.5,18.3Z" fill="url(#cbl)"/><path d="M14,10.2 L31,5.6 L30.6,22.6 C26,26 20,29 14,29.6Z" fill="url(#cbr)"/><path d="M14,10.4 V28.5" stroke="#fff36a" stroke-width="1.3" fill="none"/><path d="M4,5 L14,10.2 L30,6" stroke="#fbe84a" stroke-width=".8" fill="none"/></svg>Schema<br>predefinito:<br>ACQUISTI</div><div class="ic" style="left:649px;top:713px"><svg viewBox="0 0 32 32" style="top:0px"><defs><linearGradient id="cbl" x1="0" y1="0" x2="1" y2="0"><stop offset="0" stop-color="#e89a00"/><stop offset="1" stop-color="#f8d620"/></linearGradient><linearGradient id="cbr" x1="0" y1="0" x2="1" y2="1"><stop offset="0" stop-color="#d8a008"/><stop offset="1" stop-color="#a06c00"/></linearGradient><linearGradient id="cbt" x1="0" y1="0" x2="1" y2="1"><stop offset="0" stop-color="#fbe820"/><stop offset="1" stop-color="#e4bc08"/></linearGradient></defs><path d="M3,5 C3,4 4,3.6 5,3.4 L15,1.8 L30,4.6 C31,4.8 31.3,5.5 31.3,6.5 L30.8,22.5 C27,26 20,29.3 14.5,30 C10,27.5 5,22.5 3.2,18.5Z" fill="#c08a04"/><path d="M3.5,4.5 L15,2 L31,5.5 L14,10.2Z" fill="url(#cbt)"/><path d="M3.5,4.8 L14,10.2 L14,29.6 C10,27 5,22 3.5,18.3Z" fill="url(#cbl)"/><path d="M14,10.2 L31,5.6 L30.6,22.6 C26,26 20,29 14,29.6Z" fill="url(#cbr)"/><path d="M14,10.4 V28.5" stroke="#fff36a" stroke-width="1.3" fill="none"/><path d="M4,5 L14,10.2 L30,6" stroke="#fbe84a" stroke-width=".8" fill="none"/></svg>Schema<br>predefinito:<br>CONTABILITA'</div><div class="ic" style="left:749px;top:713px"><svg viewBox="0 0 32 32" style="top:0px"><defs><linearGradient id="cbl" x1="0" y1="0" x2="1" y2="0"><stop offset="0" stop-color="#e89a00"/><stop offset="1" stop-color="#f8d620"/></linearGradient><linearGradient id="cbr" x1="0" y1="0" x2="1" y2="1"><stop offset="0" stop-color="#d8a008"/><stop offset="1" stop-color="#a06c00"/></linearGradient><linearGradient id="cbt" x1="0" y1="0" x2="1" y2="1"><stop offset="0" stop-color="#fbe820"/><stop offset="1" stop-color="#e4bc08"/></linearGradient></defs><path d="M3,5 C3,4 4,3.6 5,3.4 L15,1.8 L30,4.6 C31,4.8 31.3,5.5 31.3,6.5 L30.8,22.5 C27,26 20,29.3 14.5,30 C10,27.5 5,22.5 3.2,18.5Z" fill="#c08a04"/><path d="M3.5,4.5 L15,2 L31,5.5 L14,10.2Z" fill="url(#cbt)"/><path d="M3.5,4.8 L14,10.2 L14,29.6 C10,27 5,22 3.5,18.3Z" fill="url(#cbl)"/><path d="M14,10.2 L31,5.6 L30.6,22.6 C26,26 20,29 14,29.6Z" fill="url(#cbr)"/><path d="M14,10.4 V28.5" stroke="#fff36a" stroke-width="1.3" fill="none"/><path d="M4,5 L14,10.2 L30,6" stroke="#fbe84a" stroke-width=".8" fill="none"/></svg>Schema<br>predefinito:<br>MAGAZZINO</div><div class="ic" style="left:849px;top:713px"><svg viewBox="0 0 32 32" style="top:0px"><defs><linearGradient id="cbl" x1="0" y1="0" x2="1" y2="0"><stop offset="0" stop-color="#e89a00"/><stop offset="1" stop-color="#f8d620"/></linearGradient><linearGradient id="cbr" x1="0" y1="0" x2="1" y2="1"><stop offset="0" stop-color="#d8a008"/><stop offset="1" stop-color="#a06c00"/></linearGradient><linearGradient id="cbt" x1="0" y1="0" x2="1" y2="1"><stop offset="0" stop-color="#fbe820"/><stop offset="1" stop-color="#e4bc08"/></linearGradient></defs><path d="M3,5 C3,4 4,3.6 5,3.4 L15,1.8 L30,4.6 C31,4.8 31.3,5.5 31.3,6.5 L30.8,22.5 C27,26 20,29.3 14.5,30 C10,27.5 5,22.5 3.2,18.5Z" fill="#c08a04"/><path d="M3.5,4.5 L15,2 L31,5.5 L14,10.2Z" fill="url(#cbt)"/><path d="M3.5,4.8 L14,10.2 L14,29.6 C10,27 5,22 3.5,18.3Z" fill="url(#cbl)"/><path d="M14,10.2 L31,5.6 L30.6,22.6 C26,26 20,29 14,29.6Z" fill="url(#cbr)"/><path d="M14,10.4 V28.5" stroke="#fff36a" stroke-width="1.3" fill="none"/><path d="M4,5 L14,10.2 L30,6" stroke="#fbe84a" stroke-width=".8" fill="none"/></svg>Statistica di<br>vendita per cliente</div><div class="t" style="left:9px;top:223px">a clienti</div><div class="t" style="left:9px;top:566px">Note di credito</div><div class="abs" style="left:560px;top:300px;width:340px;height:213px;background:#fff;overflow:hidden"><svg width="340" height="213" style="left:0;top:0"><circle cx="215" cy="114" r="87.6" fill="none" stroke="#5f82e6" stroke-width="10"/></svg></div></div>
<div class="win" style="left:13px;top:102px;width:763px;height:531px"><div class="wtb" style="height:20px"></div><div class="t" style="left:3px;top:6px;color:#e4ebf5;font:bold 12px 'DejaVu Sans Condensed',sans-serif;line-height:15px;letter-spacing:0.1px;text-shadow:1px 1px 0 #5a7399">SOLLECITI DI PAGAMENTO</div><div class="abs" style="left:743px;top:5px;width:12px;height:12px;background:#8daad2;border:1px solid #9db8dc"><svg width="10" height="10" style="left:0;top:0"><path d="M1.5,1.5l7,7M8.5,1.5l-7,7" stroke="#fff" stroke-width="2.2"/></svg></div><div class="abs" style="left:3px;top:20px;width:755px;height:506px;background:#dedede"></div><div class="abs" style="left:3px;top:20px;width:755px;height:38px;border-bottom:1px solid #c8c8c8;background:linear-gradient(90deg,#fff 262px,#ff1e1e 705px)"></div><svg width="38" height="28" viewBox="0 0 38 28" style="left:7px;top:24px"><defs><radialGradient id="sb1" cx="0.35" cy="0.35" r="0.75"><stop offset="0" stop-color="#e8442e"/><stop offset="0.6" stop-color="#cc2c1e"/><stop offset="1" stop-color="#a82014"/></radialGradient></defs><path d="M20,10 C21,6 26,4.3 30,6 C34,8 35.8,13 34.3,17 C32.5,21.5 27,24.2 23,23.6 C19.5,22 19,15 20,10Z" fill="url(#sb1)"/><path d="M1.8,9.5 C1.8,4.5 8,3 12,3.5 C17,3 20.3,7 19.8,13 C19.3,19 16.5,24.3 13.8,24.8 C9,24.8 1.8,17 1.8,9.5Z" fill="url(#sb1)"/><path d="M13,8 C16,10 17,15 15,21" stroke="#b0261a" stroke-width="2.5" fill="none" opacity=".6"/><path d="M3.5,6 L5.5,1.8 L7.5,4.5 L9.5,1.2 L10.8,4.3 L13.5,3.2 L11,7.2 L6,7.5Z" fill="#4a7a2a"/><path d="M27.5,6.5 L31,4.5 L31.3,8 L35,7 L34,10.5 L37.5,11.3 L34.3,14 L33.5,17 C32,12.5 30,9.5 27.5,6.5Z" fill="#5a8a32"/><path d="M28.5,7.5 C30.5,9.5 32,12 33,15" stroke="#d8cc98" stroke-width="1.4" fill="none"/></svg><div class="t" style="left:56px;top:28px;font:bold 16px 'Liberation Sans',sans-serif;line-height:20px;letter-spacing:0">SOLLECITI DI PAGAMENTO</div><svg width="32" height="32" viewBox="0 0 32 32" style="left:715px;top:23px"><path d="M4.2,10.5 L15,1 L23,1.4 L31.8,10.5 L31.8,27.2 L4.2,30.6Z" fill="#a9a5e4" stroke="#7d79c0" stroke-width=".9"/><path d="M5.2,11 L15.3,2.2 L22.6,2.5 L30.6,10.8 L19.5,17.2Z" fill="#b9b6ee"/><path d="M19.5,17.2 L31.2,11.2 L31.2,26.4Z" fill="#f1f1fd"/><path d="M19.5,17.2 L31.2,26.6 L5,30Z" fill="#c6c4f2"/><path d="M17,14.5 L31.2,26.6" stroke="#7a76b8" stroke-width=".9" fill="none"/><path d="M6,12.2 L19,10.5 L23.2,22.8 L8.8,26.6Z" fill="#f0ee9a" stroke="#9a9860" stroke-width=".7"/><path d="M15.5,15.2 L5,16.8 C2,17.4 2.4,20.8 5.4,20.4 L17.5,18.4 C20,17.9 19.4,14.8 17,15.2 L8,16.8" stroke="#4e4e28" stroke-width="1.4" fill="none"/><path d="M4.2,10.5 L15,1 L23,1.4 L31.8,10.5" stroke="#222" stroke-width="1" fill="none"/></svg><div class="t" style="left:9px;top:68px">Stringa di ricerca (Numero, data o ragione sociale)</div><div class="inp" style="left:9px;top:84px;width:291px;height:18px"></div><svg width="13" height="13" style="left:9px;top:110px"><defs><linearGradient id="cg213" x1="0" y1="0" x2="1" y2="1"><stop offset="0" stop-color="#dcdcd4"/><stop offset="1" stop-color="#fff"/></linearGradient></defs><rect x=".5" y=".5" width="12" height="12" fill="url(#cg213)" stroke="#1c5180"/><path d="M3,6.3 L5.4,8.8 L9.8,3.6" stroke="#2a8e2a" stroke-width="2.1" fill="none"/></svg><div class="t" style="left:24px;top:110px">Dal</div><div class="inp" style="left:61px;top:106px;width:95px;height:19px">01/01/2013</div><div class="t" style="left:159px;top:108px">al</div><div class="inp" style="left:177px;top:106px;width:97px;height:19px">31/12/2013</div><div class="btn" style="left:278px;top:106px;width:22px;height:20px;background:#dcdce6"><svg width="16" height="16" viewBox="0 0 16 16" style="left:2px;top:1px"><rect x="1" y="2" width="14" height="13" fill="#fff" stroke="#8a8aa8" stroke-width="1"/><rect x="1" y="2" width="14" height="3" fill="#c9ccdc"/><text x="8" y="13" font-family="Liberation Sans,sans-serif" font-weight="bold" font-size="7" text-anchor="middle" fill="#e03a1a">12</text><path d="M3,3.5h10" stroke="#7a7a98" stroke-width="1.4" stroke-dasharray="1 1"/></svg></div><svg width="13" height="13" style="left:9px;top:133px"><defs><linearGradient id="cg236" x1="0" y1="0" x2="1" y2="1"><stop offset="0" stop-color="#dcdcd4"/><stop offset="1" stop-color="#fff"/></linearGradient></defs><rect x=".5" y=".5" width="12" height="12" fill="url(#cg236)" stroke="#1c5180"/></svg><div class="t" style="left:24px;top:133px">Dal N.</div><div class="inp" style="left:61px;top:129px;width:95px;height:19px"></div><div class="t" style="left:159px;top:131px">al</div><div class="inp" style="left:177px;top:129px;width:97px;height:19px"></div><div class="t" style="left:12px;top:153px">Contenuto</div><div class="inp" style="left:69px;top:151px;width:231px;height:18px"></div><div class="btn" style="left:306px;top:82px;width:94px;height:88px"><svg width="34" height="22" viewBox="0 0 34 22" style="left:29px;top:24px"><path d="M2,4.5 L13,0.5 L24,3 L13,8Z" fill="#3a3e44"/><path d="M4,4.5 L13,1.8 L21,3.2 L12,6Z" fill="#7a7e84"/><path d="M5.5,6.5 L15.5,14.5" stroke="#5d656e" stroke-width="9.6" stroke-linecap="round"/><path d="M6,4.6 L15,11.5" stroke="#dde2e8" stroke-width="3" stroke-linecap="round"/><path d="M17,4.5 L27,11.5" stroke="#69717a" stroke-width="9.6" stroke-linecap="round"/><path d="M18,2.8 L27,8.8" stroke="#e4e8ee" stroke-width="3" stroke-linecap="round"/><circle cx="16.2" cy="15.2" r="4.3" fill="#9cc6ee"/><circle cx="15" cy="14" r="2" fill="#d4e8fa"/><circle cx="27.6" cy="12.2" r="4.3" fill="#a6ccf0"/><circle cx="26.5" cy="11" r="2" fill="#dcecfb"/></svg><span style="top:70px">Esegui ricerca</span></div><div class="hdr" style="left:406px;top:83px;width:114px;height:16px">Visualizzazione</div><div class="lst" style="left:406px;top:100px;width:114px;height:69px"><div class="sel" style="top:1px">Default</div></div><div class="hdr" style="left:526px;top:83px;width:114px;height:16px">Ordinamento</div><div class="lst" style="left:526px;top:100px;width:114px;height:69px"><div class="sel" style="top:1px">Ord. per numero</div><div style="top:14px">Ord. per data</div></div><div class="abs" style="left:9px;top:178px;width:749px;height:240px;background:#808080;border:1px solid #000"></div><div class="abs" style="left:10px;top:179px;width:747px;height:16px;background:#dfdfdf;border-bottom:1px solid #000"></div><div class="abs" style="left:10px;top:195px;width:747px;height:17px;background:#fcfcfc;border-bottom:1px solid #000"></div><div class="abs" style="left:10px;top:179px;width:20px;height:32px;background:#dfdfdf;border-right:1px solid #000"></div><div class="abs" style="left:10px;top:194px;width:19px;height:1px;background:#000"></div><div class="abs" style="left:82px;top:179px;width:1px;height:32px;background:#c0c0c0"></div><div class="abs" style="left:215px;top:179px;width:1px;height:32px;background:#c0c0c0"></div><div class="abs" style="left:282px;top:179px;width:1px;height:32px;background:#c0c0c0"></div><div class="t" style="left:30px;top:180px;width:50px;text-align:right">Cod.</div><div class="t" style="left:85px;top:180px">Oggetto</div><div class="t" style="left:216px;top:180px;width:66px;text-align:center">Data</div><div class="t" style="left:285px;top:180px">Intestazione</div><div class="btn def" style="left:11px;top:423px;width:98px;height:69px"><svg width="32" height="32" viewBox="0 0 32 32" style="left:34px;top:12px"><rect x="1" y="1" width="27" height="27" fill="#fafaff" stroke="#9a9ab0" stroke-width="1"/><rect x="1.5" y="10" width="26" height="9" fill="#ffb040"/><path d="M10,1v27M19,1v27M1,10h27M1,19h27" stroke="#a4a4bc" stroke-width="1"/><path d="M16.5,21.5h4.5v-4.5h4v4.5h4.5v4h-4.5v4.5h-4v-4.5h-4.5z" fill="#62d446" stroke="#2f9a22" stroke-width="1"/><path d="M22,18v4.5h-4.5" stroke="#a8f090" stroke-width="1" fill="none"/></svg><span style="top:52px;white-space:normal;line-height:13px">Nuovo (F4)</span></div><div class="btn" style="left:111px;top:423px;width:98px;height:69px"><svg width="32" height="32" viewBox="0 0 32 32" style="left:34px;top:12px"><rect x="1" y="1" width="27" height="27" fill="#fafaff" stroke="#9a9ab0" stroke-width="1"/><rect x="1.5" y="10" width="26" height="9" fill="#ffb040"/><path d="M10,1v27M19,1v27M1,10h27M1,19h27" stroke="#a4a4bc" stroke-width="1"/><rect x="14.5" y="18.5" width="12" height="10" fill="#fff" stroke="#8a8aa0"/><path d="M15,19 L19.5,26 L28,12.5" stroke="#123c9c" stroke-width="3" fill="none"/></svg><span style="top:52px;white-space:normal;line-height:13px">Visualizza</span></div><div class="btn" style="left:211px;top:423px;width:98px;height:69px"><svg width="32" height="32" viewBox="0 0 32 32" style="left:33px;top:10px"><path d="M10,1 H21 L28,8 V25 H10Z" fill="#b9aee0" stroke="#7a70b0" stroke-width="1"/><path d="M21,1 V8 H28Z" fill="#e4def6"/><path d="M2,7 H14 L20,13 V31 H2Z" fill="#f2f4fd" stroke="#6a74a8" stroke-width="1"/><path d="M14,7 V13 H20Z" fill="#c9d0ee"/><rect x="4" y="15" width="14" height="14" fill="#a9b4e4"/><rect x="4" y="15" width="14" height="3" fill="#c9d0f0"/></svg><span style="top:52px;white-space:normal;line-height:13px">Duplica</span></div><div class="btn" style="left:311px;top:423px;width:98px;height:69px"><svg width="32" height="32" viewBox="0 0 32 32" style="left:32px;top:3px"><path d="M2,1 H11 L16,6 V23 H2Z" fill="#f4f6fd" stroke="#7a84b4" stroke-width="1"/><path d="M12,7 H23 L30,14 V30 H12Z" fill="#eef2fc" stroke="#7a84b4" stroke-width="1"/><path d="M23,7 V14 H30Z" fill="#c4d4f0"/><circle cx="17" cy="15" r="5.5" fill="#b0a8dc"/><circle cx="17" cy="15" r="2" fill="#eef"/><path d="M17,8v14M10,15h14M12,10l10,10M22,10l-10,10" stroke="#b0a8dc" stroke-width="2.2"/><circle cx="17" cy="15" r="2.2" fill="#f0f0fc"/></svg><span style="top:39px;white-space:normal;line-height:13px">Generazione<br>solleciti</span></div><div class="btn" style="left:411px;top:423px;width:98px;height:69px"><svg width="32" height="32" viewBox="0 0 32 32" style="left:32px;top:10px"><path d="M2.5,6 L23,0.5 L30.5,19.5 C26,23 21,26 12,31 C10,24 6,14 2.5,6Z" fill="#ecdc3e"/><path d="M4,7 L22,2 L28.5,19 C24,22.5 20,24.5 13,28.5Z" fill="#f8f08c"/><path d="M6.0,10.0 L24.0,5.4" stroke="#c8b84a" stroke-width="1.5"/><path d="M6.9,14.6 L24.9,10.0" stroke="#c8b84a" stroke-width="1.5"/><path d="M7.8,19.2 L25.8,14.6" stroke="#c8b84a" stroke-width="1.5"/><path d="M8.7,23.8 L26.7,19.2" stroke="#c8b84a" stroke-width="1.5"/></svg><span style="top:52px;white-space:normal;line-height:13px">Testi standard</span></div><div class="btn" style="left:511px;top:423px;width:98px;height:69px"><svg width="32" height="32" viewBox="0 0 32 32" style="left:32px;top:10px"><path d="M7,13 L5,1 L17,0 L23,9 L22,14Z" fill="#dbe9f6" stroke="#a8bccf" stroke-width=".8"/><path d="M1,17 L9,11 L25,11 L31,16 L31,22 L17,30 L1,24Z" fill="#c9ccd2"/><path d="M1,17 L9,11 L25,11 L31,16 L17,22Z" fill="#eceef2"/><path d="M1,17 L17,22 L17,30 L1,24Z" fill="#a8acb4"/><path d="M17,22 L31,16 L31,22 L17,30Z" fill="#70747c"/><path d="M4,19.5 L15,23.5 L15,26.5 L4,22.5Z" fill="#3a3e46"/><circle cx="26.5" cy="15.5" r="1.3" fill="#3ac43a"/></svg><span style="top:52px;white-space:normal;line-height:13px">Stampa (F9)</span></div><div class="btn" style="left:611px;top:423px;width:98px;height:69px"><svg width="24" height="24" viewBox="0 0 24 24" style="left:36px;top:15px"><rect x=".5" y=".5" width="23" height="23" rx="2.5" fill="#dc3a2a" stroke="#b8261a"/><rect x="1.5" y="1.5" width="21" height="10" rx="2" fill="#ea6252"/><circle cx="12" cy="12" r="6" fill="none" stroke="#fff" stroke-width="2"/><rect x="11" y="8" width="2" height="6" fill="#fff"/></svg><span style="top:52px;white-space:normal;line-height:13px">Uscita (ESC)</span></div><div class="wc" style="left:6px;top:504px;width:284px;letter-spacing:0px">GIGAMATIC DI LO COCO CASTRENZE</div><div class="wc" style="left:292px;top:504px;width:286px;letter-spacing:0px">Intestatario licenza : GIGAMATIC DI LO COCO CASTRENZE</div><div class="wc" style="left:580px;top:504px;width:78px;letter-spacing:0.5px">21/05/2013</div><div class="wc" style="left:661px;top:504px;width:78px;letter-spacing:0px">9.39</div><svg width="10" height="10" style="left:741px;top:512px"><path d="M6,1h2v2h-2zM1,6h2v2h-2zM6,6h2v2h-2z" fill="#fff"/><path d="M5,0h2v2h-2zM0,5h2v2h-2zM5,5h2v2h-2z" fill="#b4b4b4"/></svg></div>
<div class="win" style="left:494px;top:253px;width:452px;height:234px;border-color:#34455e;background:#dedede;border-radius:3px 3px 0 0;box-shadow:inset 2px 0 0 #f3f5f8,inset -2px 0 0 #f3f5f8,inset 0 -2px 0 #f3f5f8"><div class="wtb" style="height:27px;border-top:1px solid #a9c0dd;border-bottom:1px solid #f2f6fa;border-radius:2px 2px 0 0;background:linear-gradient(#668bb9 0%,#7598c4 50%,#83a5cd 100%)"></div><div class="t ttl" style="left:0;width:450px;top:7px;font-size:12px;line-height:15px">Ready Pro 2013 - V15.4.27</div><div class="abs" style="left:6px;top:35px;width:437px;height:195px;border:1px solid #c4c4c4;border-radius:4px;box-shadow:inset 1px 1px 0 #f4f4f4,1px 1px 0 #f4f4f4"></div><div class="t" style="left:12px;top:29px;background:#dedede;padding:0 3px 0 2px">Operazione non prevista</div><svg width="48" height="48" viewBox="0 0 48 48" style="left:13px;top:48px"><defs><radialGradient id="bgs" cx="0.38" cy="0.5" r="0.65"><stop offset="0" stop-color="#ffe04a"/><stop offset="0.55" stop-color="#f2b414"/><stop offset="1" stop-color="#c47f08"/></radialGradient></defs><g stroke="#0c0c0c" stroke-width="2.4" stroke-linecap="round"><path d="M12,21 L6,17.5 M11,30 L6.5,32 M18,37 L15.5,44 M36,34 L40,38.5"/></g><circle cx="5.5" cy="17" r="2.3" fill="#0c0c0c"/><circle cx="6" cy="32.5" r="2.3" fill="#0c0c0c"/><circle cx="15.3" cy="44.5" r="2.4" fill="#0c0c0c"/><circle cx="40.5" cy="39" r="2.4" fill="#0c0c0c"/><ellipse cx="24" cy="24.5" rx="15" ry="16.5" fill="url(#bgs)"/><path d="M9.8,20 C11,8 24,4 38,9 C40,13 40,17 38.5,21 C30,13 18,13 9.8,20Z" fill="#2e2e2e"/><path d="M13,14 C17,9 24,7.5 31,9" stroke="#6a6a6a" stroke-width="1.6" fill="none"/><g fill="none" stroke="#3fd23f" stroke-width="2.3"><circle cx="31" cy="18.7" r="12"/><circle cx="31" cy="18.7" r="6"/><path d="M31,3.5V34M15.5,18.7H46.5"/></g><circle cx="31" cy="18.7" r="2.6" fill="#f08a1a"/></svg><div class="abs" style="left:74px;top:50px;width:361px;height:127px;background:#fff;border:1px solid;border-color:#8a8a8a #e8e8e8 #e8e8e8 #8a8a8a;box-shadow:inset 1px 1px 0 #c8c8c8"></div><div class="t" style="left:76px;top:52px;line-height:13px">Descrizione : "PrimaryKey" non è un indice in questa tabella.</div><div class="t" style="left:76px;top:65px;line-height:13px">Source : DAO.Recordset</div><div class="t" style="left:76px;top:78px;line-height:13px">Codice errore : 3800</div><div class="btn def" style="left:74px;top:184px;width:117px;height:38px"><div class="abs" style="left:3px;top:3px;right:3px;bottom:3px;border:1px dotted #000"></div><svg width="24" height="24" viewBox="0 0 24 24" style="left:5px;top:5px"><defs><radialGradient id="bgs" cx="0.38" cy="0.5" r="0.65"><stop offset="0" stop-color="#ffe04a"/><stop offset="0.55" stop-color="#f2b414"/><stop offset="1" stop-color="#c47f08"/></radialGradient></defs><g stroke="#111" stroke-width="1.7" stroke-linecap="round" fill="none"><path d="M5,9 L1.5,7 M4,14.5 L0.8,15.5 M7,20 L5.5,23 M17,20 L19,23 M18.5,9 L21,7.5"/></g><ellipse cx="11.5" cy="13" rx="8.3" ry="8.8" fill="url(#bgs)"/><path d="M4.2,9 C5.5,1.5 17.5,1.5 18.8,9 C15,6.3 8,6.3 4.2,9Z" fill="#2c2c2c"/><path d="M6.5,6 C8.5,3.5 13,3.2 15.5,5" stroke="#666" stroke-width="1" fill="none"/><path d="M10.5,11.5 L10.5,23.5 L21,17.5Z" fill="#4cc43a" stroke="#2a8a1e" stroke-width="1"/></svg><span style="top:12px;left:28px">Riprova</span></div><div class="btn" style="left:196px;top:184px;width:117px;height:38px"><svg width="24" height="24" viewBox="0 0 24 24" style="left:4px;top:4px"><defs><radialGradient id="bgs" cx="0.38" cy="0.5" r="0.65"><stop offset="0" stop-color="#ffe04a"/><stop offset="0.55" stop-color="#f2b414"/><stop offset="1" stop-color="#c47f08"/></radialGradient></defs><g stroke="#111" stroke-width="1.7" stroke-linecap="round" fill="none"><path d="M5,9 L1.5,7 M4,14.5 L0.8,15.5 M7,20 L5.5,23 M17,20 L19,23 M18.5,9 L21,7.5"/></g><ellipse cx="11.5" cy="13" rx="8.3" ry="8.8" fill="url(#bgs)"/><path d="M4.2,9 C5.5,1.5 17.5,1.5 18.8,9 C15,6.3 8,6.3 4.2,9Z" fill="#2c2c2c"/><path d="M6.5,6 C8.5,3.5 13,3.2 15.5,5" stroke="#666" stroke-width="1" fill="none"/><rect x="9.5" y="12.5" width="11.5" height="11" rx="1.5" fill="#f04a1a" stroke="#c02a0a" stroke-width="1"/><rect x="11" y="14" width="8.5" height="3.5" fill="#ff8a4a"/></svg><span style="top:11px;left:30px">Annulla (Esc)</span></div><div class="btn" style="left:318px;top:184px;width:117px;height:38px"><svg width="24" height="24" viewBox="0 0 24 24" style="left:4px;top:4px"><defs><radialGradient id="bgs" cx="0.38" cy="0.5" r="0.65"><stop offset="0" stop-color="#ffe04a"/><stop offset="0.55" stop-color="#f2b414"/><stop offset="1" stop-color="#c47f08"/></radialGradient></defs><g stroke="#111" stroke-width="1.7" stroke-linecap="round" fill="none"><path d="M5,9 L1.5,7 M4,14.5 L0.8,15.5 M7,20 L5.5,23 M17,20 L19,23 M18.5,9 L21,7.5"/></g><ellipse cx="11.5" cy="13" rx="8.3" ry="8.8" fill="url(#bgs)"/><path d="M4.2,9 C5.5,1.5 17.5,1.5 18.8,9 C15,6.3 8,6.3 4.2,9Z" fill="#2c2c2c"/><path d="M6.5,6 C8.5,3.5 13,3.2 15.5,5" stroke="#666" stroke-width="1" fill="none"/><circle cx="12" cy="12.5" r="4.6" fill="#cfe6fa" stroke="#8a6a30" stroke-width="1.4"/><path d="M15.5,16.5 L21,22.5" stroke="#e8902a" stroke-width="3" stroke-linecap="round"/></svg><span style="top:11px;left:28px">Dettagli</span></div></div>
</body>
</html>
